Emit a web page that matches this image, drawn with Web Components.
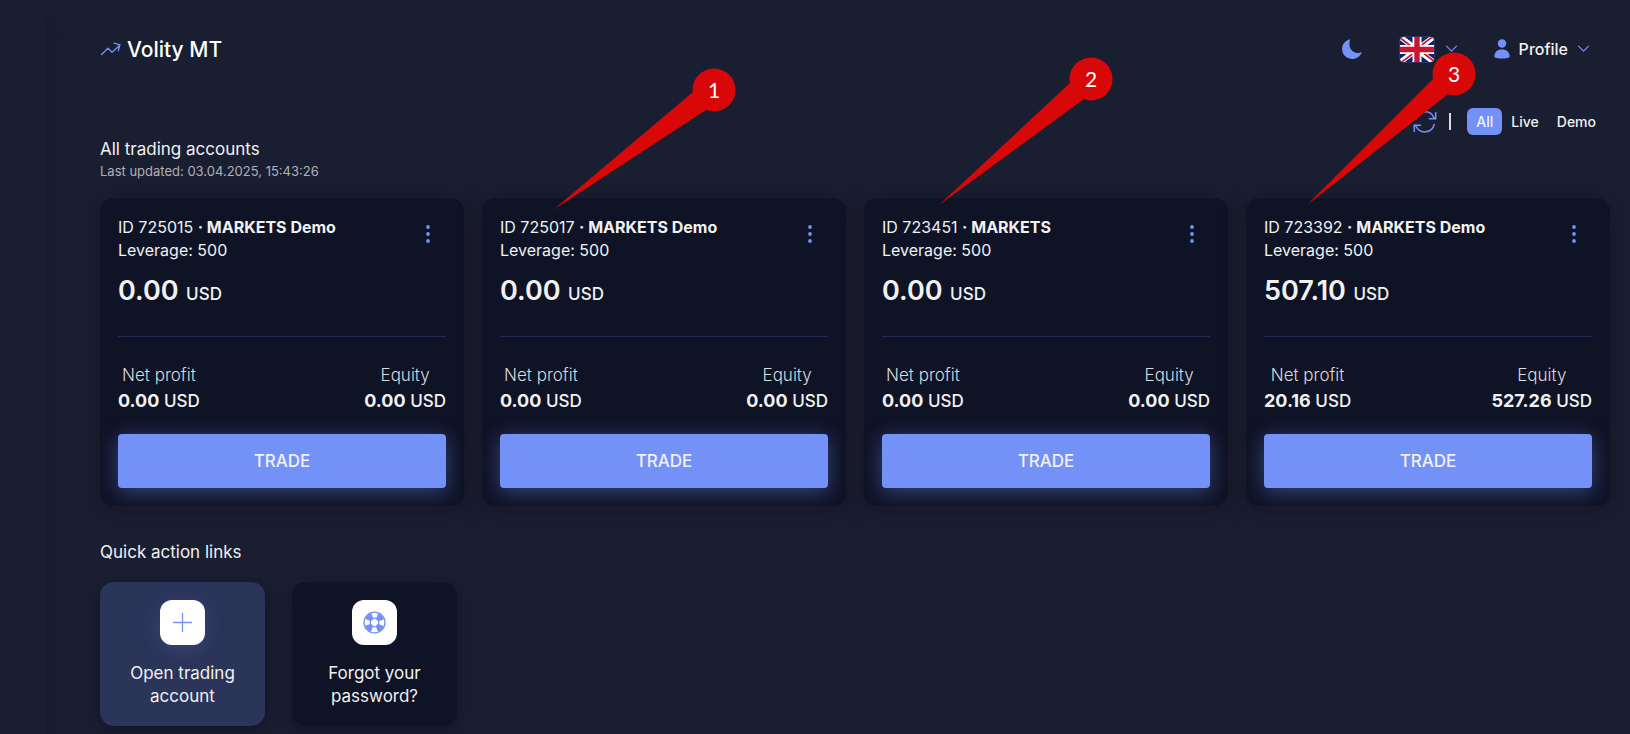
<!DOCTYPE html>
<html lang="en">
<head>
<meta charset="utf-8">
<meta name="viewport" content="width=device-width, initial-scale=1">
<title>Volity MT</title>
<style>
    :root {
        --bg: #1a1e31;
        --panel: #0f1326;
        --accent: #7491f7;
        --text: #f1f1f1;
        --muted: #dadadc;
        --line: #242b52;
        --pin: #d90808;
    }

    body {
        margin: 0;
        background: var(--bg);
        color: var(--text);
        font: 16px/23px Inter, "Open Sans", sans-serif;
    }
</style>
</head>
<body>
<trade-app>
    <app-header slot="header" brand="Volity MT"></app-header>
    <accounts-toolbar slot="toolbar" updated="03.04.2025, 15:43:26">All trading accounts</accounts-toolbar>

    <account-card number="725015" type="MARKETS Demo" balance="0.00" profit="0.00" equity="0.00"></account-card>
    <account-card number="725017" type="MARKETS Demo" balance="0.00" profit="0.00" equity="0.00">
        <callout-pin label="1" tip="71,12" head="161,-120" joint="140,-118 153,-100"></callout-pin>
    </account-card>
    <account-card number="723451" type="MARKETS" balance="0.00" profit="0.00" equity="0.00">
        <callout-pin label="2" tip="75,7" head="152,-126" joint="131,-122 145,-106"></callout-pin>
    </account-card>
    <account-card number="723392" type="MARKETS Demo" balance="507.10" profit="20.16" equity="527.26">
        <callout-pin label="3" tip="61,7" head="147,-131" joint="126,-126 140,-110"></callout-pin>
    </account-card>

    <quick-action slot="actions" icon="plus" active>Open trading account</quick-action>
    <quick-action slot="actions" icon="lifebuoy">Forgot your password?</quick-action>
</trade-app>

<script>
const ICONS = {
    trend: `<svg width="22" height="14" viewBox="0 0 22 14" fill="none" stroke="currentColor" stroke-width="1.3" stroke-linecap="round" stroke-linejoin="round"><path d="M1.5 12.5 8 6.2l4 4 7.8-7M14 1.2l6 1.7-1.8 6"/></svg>`,
    moon: `<svg width="22" height="22" viewBox="0 0 22 22" fill="currentColor"><path d="M9.3 1.2C5 2 1 5.800 1 11a10 10 0 0 0 10 10c4.800 0 8.700-3.100 9.900-7.300-1.300.8-2.600 1.200-4 1.200-4.700 0-8.500-3.700-8.500-8.300 0-2 .3-3.800.9-5.400z"/></svg>`,
    chevron: `<svg width="13" height="8" viewBox="0 0 13 8" fill="none" stroke="currentColor" stroke-width="1.2" stroke-linecap="round" stroke-linejoin="round"><path d="m1.500 1.200 5 5 5-5"/></svg>`,
    user: `<svg width="16" height="20" viewBox="0 0 16 20" fill="currentColor"><circle cx="8" cy="4.500" r="4.200"/><path d="M.3 17.800C.3 13 3.300 10.500 8 10.500s7.700 2.500 7.700 7.300c0 1.200-3.700 1.800-7.700 1.800S.3 19 .3 17.800z"/></svg>`,
    refresh: `<svg width="24" height="22" viewBox="0 0 24 22" fill="none" stroke="currentColor" stroke-width="1.500" stroke-linecap="round" stroke-linejoin="round"><path d="M22.700 1.500v6.200h-6.300M1.300 20.400v-6.200h6.300"/><path d="M2.600 8.300A9.700 9.700 0 0 1 20.900 6.600l1.600 1.100M21.200 13.500A9.700 9.700 0 0 1 3 15.300l-1.500-1.100"/></svg>`,
    dots: `<svg width="4" height="18" viewBox="0 0 4 18" fill="currentColor"><circle cx="2" cy="2" r="1.900"/><circle cx="2" cy="9" r="1.900"/><circle cx="2" cy="16" r="1.900"/></svg>`,
    plus: `<svg width="23" height="23" viewBox="0 0 23 23" fill="none" stroke="currentColor" stroke-width="1.300" stroke-linecap="round"><path d="M11.500 2.500v18M2.500 11.500h18"/></svg>`,
    lifebuoy: `<svg width="23" height="23" viewBox="0 0 24 24" fill="none" stroke="currentColor"><circle cx="12" cy="12" r="10.900" stroke-width="1.400"/><circle cx="12" cy="12" r="7" stroke-width="6.600" stroke-dasharray="6.100 4.900" stroke-dashoffset="-2.450"/><circle cx="12" cy="12" r="4.500" stroke-width="1.400"/></svg>`,
    flag: `<svg width="36" height="27" viewBox="0 0 36 27">
        <defs>
            <clipPath id="edge"><rect x="1" y="1" width="34" height="25" rx="4"/></clipPath>
            <clipPath id="turn"><path d="M18 13.500h18V27zM18 13.500V27H0zM18 13.500H0V0zM18 13.500V0h18z"/></clipPath>
        </defs>
        <rect width="36" height="27" rx="5" fill="#2c3760"/>
        <g clip-path="url(#edge)">
            <path fill="#04246b" d="M0 0h36v27H0z"/>
            <path stroke="#fff" stroke-width="5.400" d="m0 0 36 27M36 0 0 27"/>
            <path stroke="#cb1430" stroke-width="3.400" clip-path="url(#turn)" d="m0 0 36 27M36 0 0 27"/>
            <path stroke="#fff" stroke-width="9" d="M18 0v27M0 13.500h36"/>
            <path stroke="#cb1430" stroke-width="5.400" d="M18 0v27M0 13.500h36"/>
        </g>
    </svg>`
};

// Shared by every element that holds buttons or icons
const BASE = `
    svg { display: block; flex: none; }
    button {
        display: flex;
        align-items: center;
        margin: 0;
        padding: 0;
        border: 0;
        background: none;
        color: inherit;
        font: inherit;
        cursor: pointer;
    }
`;

class TradeApp extends HTMLElement {
    constructor() {
        super();
        this.attachShadow({ mode: 'open' }).innerHTML = `
            <style>
                :host {
                    display: grid;
                    grid-template-columns: 46px minmax(0, 1fr);
                    min-height: 100vh;
                }
                aside { box-shadow: 0 20px 20px rgba(22, 18, 30, 0.4); }
                main { padding: 0 20px 7px 54px; }
                .cards {
                    display: grid;
                    grid-template-columns: repeat(4, minmax(0, 1fr));
                    gap: 18px;
                    margin-top: 16px;
                }
                h2 {
                    margin: 34px 0 18px;
                    font-size: 17px;
                    font-weight: 400;
                    line-height: 24px;
                }
                .actions { display: flex; gap: 27px; }
                @media (max-width: 1100px) {
                    .cards { grid-template-columns: repeat(auto-fill, minmax(290px, 1fr)); }
                }
            </style>
            <aside></aside>
            <main>
                <slot name="header"></slot>
                <slot name="toolbar"></slot>
                <section class="cards"><slot></slot></section>
                <h2>Quick action links</h2>
                <nav class="actions"><slot name="actions"></slot></nav>
            </main>
        `;
    }
}

class AppHeader extends HTMLElement {
    connectedCallback() {
        this.attachShadow({ mode: 'open' }).innerHTML = `
            <style>
                ${BASE}
                :host {
                    display: flex;
                    align-items: center;
                    justify-content: space-between;
                    padding: 27px 20px 0 0;
                    height: 44px;
                }
                svg { color: var(--accent); }
                .brand {
                    display: flex;
                    align-items: center;
                    gap: 5px;
                    color: #fff;
                    font-size: 21px;
                    font-weight: 500;
                    text-decoration: none;
                }
                .tools { display: flex; align-items: center; gap: 36px; }
                .lang { gap: 10px; }
                .profile { gap: 9px; font-weight: 500; }
            </style>
            <a class="brand" href="#">${ICONS.trend}<span>${this.getAttribute('brand')}</span></a>
            <div class="tools">
                <button aria-label="Dark mode">${ICONS.moon}</button>
                <button class="lang" aria-label="Language">${ICONS.flag}${ICONS.chevron}</button>
                <button class="profile">${ICONS.user}<span>Profile</span>${ICONS.chevron}</button>
            </div>
        `;
    }
}

class AccountsToolbar extends HTMLElement {
    connectedCallback() {
        this.attachShadow({ mode: 'open' }).innerHTML = `
            <style>
                ${BASE}
                :host { display: block; padding-top: 37px; }
                .filters {
                    display: flex;
                    align-items: center;
                    justify-content: flex-end;
                    margin-right: 5px;
                    font-size: 14px;
                    font-weight: 500;
                }
                .refresh { color: var(--accent); }
                .bar {
                    width: 2px;
                    height: 17px;
                    margin: 0 16px 0 12px;
                    background: var(--muted);
                }
                .filter { height: 27px; padding: 0 9px; border-radius: 6px; }
                .filter[aria-pressed="true"] { background: var(--accent); }
                h1 {
                    margin: 3px 0 0;
                    font-size: 17px;
                    font-weight: 400;
                    line-height: 23px;
                }
                p { margin: 0; color: #b0b1b7; font-size: 13px; line-height: 21px; }
            </style>
            <div class="filters">
                <button class="refresh" aria-label="Refresh">${ICONS.refresh}</button>
                <span class="bar"></span>
                <button class="filter" aria-pressed="true">All</button>
                <button class="filter" aria-pressed="false">Live</button>
                <button class="filter" aria-pressed="false">Demo</button>
            </div>
            <h1><slot></slot></h1>
            <p>Last updated: ${this.getAttribute('updated')}</p>
        `;

        const filters = this.shadowRoot.querySelectorAll('.filter');
        filters.forEach((button) => {
            button.addEventListener('click', () => {
                filters.forEach((other) => other.setAttribute('aria-pressed', other === button));
            });
        });
    }
}

class AccountCard extends HTMLElement {
    connectedCallback() {
        const get = (name) => this.getAttribute(name) || '';

        this.attachShadow({ mode: 'open' }).innerHTML = `
            <style>
                ${BASE}
                :host {
                    display: block;
                    position: relative;
                    padding: 18px;
                    border-radius: 14px;
                    background: var(--panel);
                    box-shadow: 0 4px 20px rgba(22, 18, 30, 0.6);
                }
                .top { display: flex; justify-content: space-between; }
                .top p { margin: 0; }
                strong { font-weight: 700; }
                .menu {
                    justify-content: center;
                    width: 36px;
                    height: 36px;
                    color: var(--accent);
                }
                .balance {
                    margin: 12px 0 25px;
                    font-size: 17px;
                    font-weight: 500;
                    line-height: 34px;
                }
                .balance b { margin-right: 3px; font-size: 27px; font-weight: 600; }
                .stats {
                    display: flex;
                    justify-content: space-between;
                    margin: 0;
                    padding: 26px 0 19px;
                    border-top: 1px solid var(--line);
                    font-size: 17px;
                    text-align: center;
                }
                dt { color: var(--muted); font-weight: 300; line-height: 24px; }
                dd { margin: 0; font-weight: 500; line-height: 28px; }
                dd b { font-size: 18px; font-weight: 700; }
                .trade {
                    justify-content: center;
                    width: 100%;
                    height: 54px;
                    border-radius: 4px;
                    background: var(--accent);
                    box-shadow: 0 4px 20px rgba(116, 145, 247, 0.4);
                    font-size: 17px;
                    font-weight: 500;
                }
            </style>
            <div class="top">
                <div>
                    <p>ID ${get('number')} <strong>· ${get('type')}</strong></p>
                    <p>Leverage: 500</p>
                </div>
                <button class="menu" aria-label="Account menu">${ICONS.dots}</button>
            </div>
            <p class="balance"><b>${get('balance')}</b> USD</p>
            <dl class="stats">
                <div><dt>Net profit</dt><dd><b>${get('profit')}</b> USD</dd></div>
                <div><dt>Equity</dt><dd><b>${get('equity')}</b> USD</dd></div>
            </dl>
            <button class="trade">TRADE</button>
            <slot></slot>
        `;
    }
}

/**
 * Numbered pin lying over a card. "tip" is the point inside the card,
 * "head" and "joint" are measured from that tip.
 */
class CalloutPin extends HTMLElement {
    connectedCallback() {
        const [left, top] = this.getAttribute('tip').split(',');
        const [cx, cy] = this.getAttribute('head').split(',').map(Number);

        this.attachShadow({ mode: 'open' }).innerHTML = `
            <style>
                :host {
                    position: absolute;
                    left: ${left}px;
                    top: ${top}px;
                    z-index: 10;
                    pointer-events: none;
                }
                svg { display: block; width: 1px; height: 1px; overflow: visible; fill: var(--pin); }
                text {
                    fill: #fff;
                    font: 21px Lato, "Open Sans", sans-serif;
                    text-anchor: middle;
                }
            </style>
            <svg>
                <polygon points="0,0 ${this.getAttribute('joint')}"/>
                <circle cx="${cx}" cy="${cy}" r="21.500"/>
                <text x="${cx}" y="${cy + 8}">${this.getAttribute('label')}</text>
            </svg>
        `;
    }
}

class QuickAction extends HTMLElement {
    connectedCallback() {
        this.attachShadow({ mode: 'open' }).innerHTML = `
            <style>
                ${BASE}
                :host { display: block; width: 165px; }
                a {
                    display: flex;
                    flex-direction: column;
                    align-items: center;
                    gap: 17px;
                    padding: 18px;
                    border-radius: 14px;
                    background: var(--panel);
                    box-shadow: 0 4px 14px rgba(14, 14, 26, 0.5);
                    color: inherit;
                    font-size: 17px;
                    text-align: center;
                    text-decoration: none;
                }
                :host([active]) a { background: #2b3459; }
                .icon {
                    display: grid;
                    place-items: center;
                    width: 45px;
                    height: 45px;
                    border-radius: 12px;
                    background: #fff;
                    color: var(--accent);
                }
                :host([active]) .icon { box-shadow: 0 4px 20px rgba(116, 145, 247, 0.2); }
            </style>
            <a href="#">
                <span class="icon">${ICONS[this.getAttribute('icon')]}</span>
                <span><slot></slot></span>
            </a>
        `;
    }
}

customElements.define('trade-app', TradeApp);
customElements.define('app-header', AppHeader);
customElements.define('accounts-toolbar', AccountsToolbar);
customElements.define('callout-pin', CalloutPin);
customElements.define('account-card', AccountCard);
customElements.define('quick-action', QuickAction);
</script>
</body>
</html>
